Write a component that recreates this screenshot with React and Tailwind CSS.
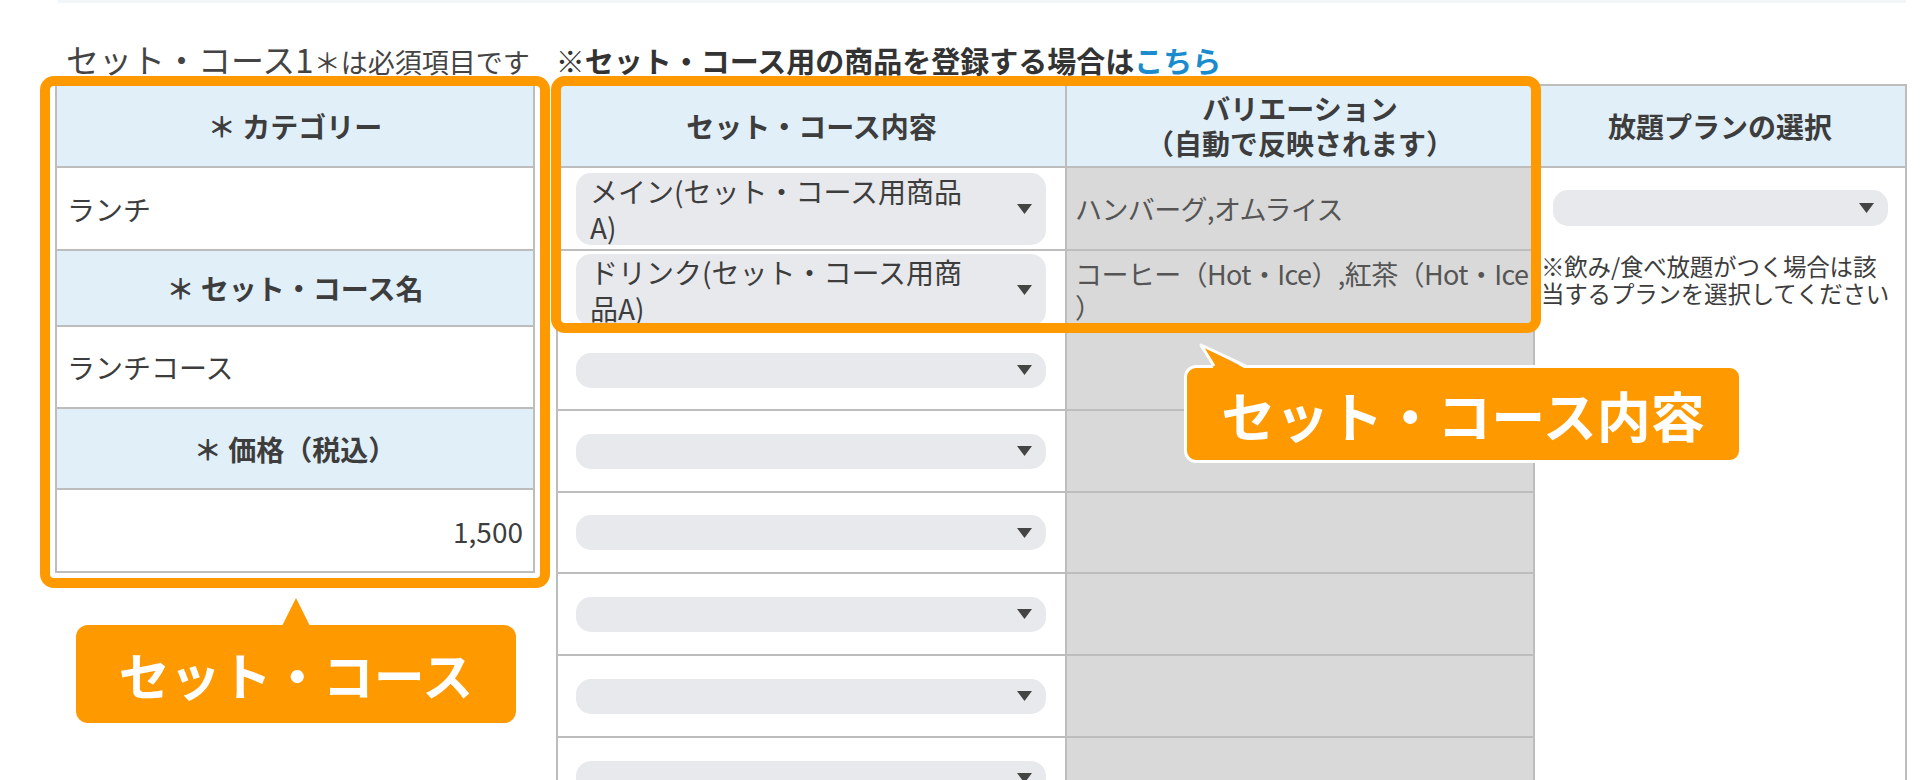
import React from "react";

const line = "border-[#bdbdbd]";

const Arrow = () => (
  <svg width="15" height="10" viewBox="0 0 15 10" className="shrink-0">
    <polygon points="0,0 15,0 7.5,10" fill="#444" />
  </svg>
);

const Select = ({ lines = [], className = "" }) => (
  <div
    className={`flex items-center justify-between rounded-[15px] bg-[#e8e9ed] pl-[14px] pr-[14px] ${className}`}
  >
    <div className="text-[28px] leading-[36px] text-[#3d3d3d]">
      {lines.map((t, i) => (
        <div key={i} className="whitespace-nowrap">
          {t}
        </div>
      ))}
    </div>
    <Arrow />
  </div>
);

const HeadCell = ({ h, children }) => (
  <div
    className={`flex items-center justify-center border-t-2 ${line} bg-[#e1eff8] text-[28px] font-bold text-[#3d3d3d] ${h}`}
  >
    {children}
  </div>
);

const BodyCell = ({ h, children, right }) => (
  <div
    className={`flex items-center border-t-2 ${line} px-[10px] text-[28px] text-[#3d3d3d] ${
      right ? "justify-end" : ""
    } ${h}`}
  >
    {children}
  </div>
);

const courseRows = [
  { h: "h-[83px]", sel: ["メイン(セット・コース用商品", "A)"], vari: ["ハンバーグ,オムライス"] },
  { h: "h-[80px]", sel: ["ドリンク(セット・コース用商", "品A)"], vari: ["コーヒー（Hot・Ice）,紅茶（Hot・Ice", "）"] },
  { h: "h-[80px]" },
  { h: "h-[82px]" },
  { h: "h-[81px]" },
  { h: "h-[82px]" },
  { h: "h-[82px]" },
  { h: "h-[82px]" },
];

const App = () => {
  return (
    <div className="relative h-[780px] w-[1920px] overflow-hidden bg-white font-['Noto_Sans_CJK_JP',sans-serif] text-[#3d3d3d]">
      <div className="ml-[58px] h-[3px] w-[1848px] bg-[#f3f6f9]" />

      {/* title */}
      <div className="mt-[36px] flex h-[40px] items-baseline pl-[66px] leading-[40px]">
        <span className="text-[33px] text-[#444]">セット・コース1</span>
        <span className="text-[27px] text-[#444]">＊は必須項目です</span>
        <span className="ml-[26px] text-[29px] font-bold text-[#333]">
          ※セット・コース用の商品を登録する場合は
          <span className="text-[#1a8ccd] underline decoration-2 underline-offset-[5px]">こちら</span>
        </span>
      </div>

      <div className="mt-[5px] flex items-start">
        {/* set / course */}
        <div className={`ml-[55px] w-[480px] border-x-2 border-b-2 ${line}`}>
          <HeadCell h="h-[82px]">＊ カテゴリー</HeadCell>
          <BodyCell h="h-[83px]">ランチ</BodyCell>
          <HeadCell h="h-[76px]">＊ セット・コース名</HeadCell>
          <BodyCell h="h-[82px]">ランチコース</BodyCell>
          <HeadCell h="h-[81px]">＊ 価格（税込）</HeadCell>
          <BodyCell h="h-[83px]" right>
            1,500
          </BodyCell>
        </div>

        {/* contents */}
        <div className="ml-[21px] flex">
          <div className={`w-[509px] border-l-2 ${line}`}>
            <HeadCell h="h-[82px]">セット・コース内容</HeadCell>
            {courseRows.map((r, i) => (
              <div key={i} className={`flex items-center border-t-2 ${line} pl-[18px] pr-[19px] ${r.h}`}>
                {r.sel ? (
                  <Select lines={r.sel} className="h-[72px] w-full" />
                ) : (
                  <Select className="h-[35px] w-full" />
                )}
              </div>
            ))}
          </div>

          <div className={`w-[468px] border-l-2 ${line}`}>
            <div
              className={`flex h-[82px] flex-col items-center justify-center border-t-2 ${line} bg-[#e1eff8] text-[28px] font-bold leading-[35px] text-[#3d3d3d]`}
            >
              <div>バリエーション</div>
              <div>（自動で反映されます）</div>
            </div>
            {courseRows.map((r, i) => (
              <div
                key={i}
                className={`flex flex-col justify-center overflow-hidden border-t-2 ${line} bg-[#d9d9d9] pl-[8px] text-[27px] leading-[33px] tracking-[-0.6px] text-[#555] ${r.h}`}
              >
                {(r.vari || []).map((t, j) => (
                  <div key={j} className="whitespace-nowrap">
                    {t}
                  </div>
                ))}
              </div>
            ))}
          </div>

          <div className={`w-[374px] border-x-2 ${line}`}>
            <HeadCell h="h-[82px]">放題プランの選択</HeadCell>
            <div className={`h-[800px] border-t-2 ${line} pl-[6px] pr-[4px] pt-[22px]`}>
              <Select className="ml-[12px] mr-[13px] h-[36px]" />
              <p className="mt-[27px] whitespace-nowrap text-[23.5px] leading-[27px] tracking-[-0.2px] text-[#3d3d3d]">
                ※飲み/食べ放題がつく場合は該
                <br />
                当するプランを選択してください
              </p>
            </div>
          </div>
        </div>
      </div>

      {/* highlight frames */}
      <div className="pointer-events-none absolute left-[40px] top-[76px] h-[512px] w-[510px] rounded-[14px] border-[10px] border-[#ff9900]" />
      <div className="pointer-events-none absolute left-[551px] top-[76px] h-[257px] w-[990px] rounded-[14px] border-[10px] border-[#ff9900]" />

      {/* callout: set / course */}
      <div className="absolute left-[282px] top-[598px] h-0 w-0 border-x-[14px] border-b-[28px] border-x-transparent border-b-[#ff9900]" />
      <div className="absolute left-[76px] top-[625px] flex h-[98px] w-[440px] items-center justify-center rounded-[12px] bg-[#ff9900] text-[51px] font-bold text-white">
        セット・コース
      </div>

      {/* callout: contents */}
      <div className="absolute left-[1184px] top-[365px] flex h-[98px] w-[558px] items-center justify-center rounded-[12px] border-[3px] border-white bg-[#ff9900] text-[54px] font-bold text-white">
        セット・コース内容
      </div>
      <svg className="absolute left-[1190px] top-[338px]" width="70" height="34" viewBox="0 0 70 34">
        <polygon points="11,7 24,31 56,31" fill="#ff9900" />
        <polyline points="24,28 11,7 56,28" fill="none" stroke="#fff" strokeWidth="3" strokeLinejoin="round" />
      </svg>
    </div>
  );
};

export default App;
